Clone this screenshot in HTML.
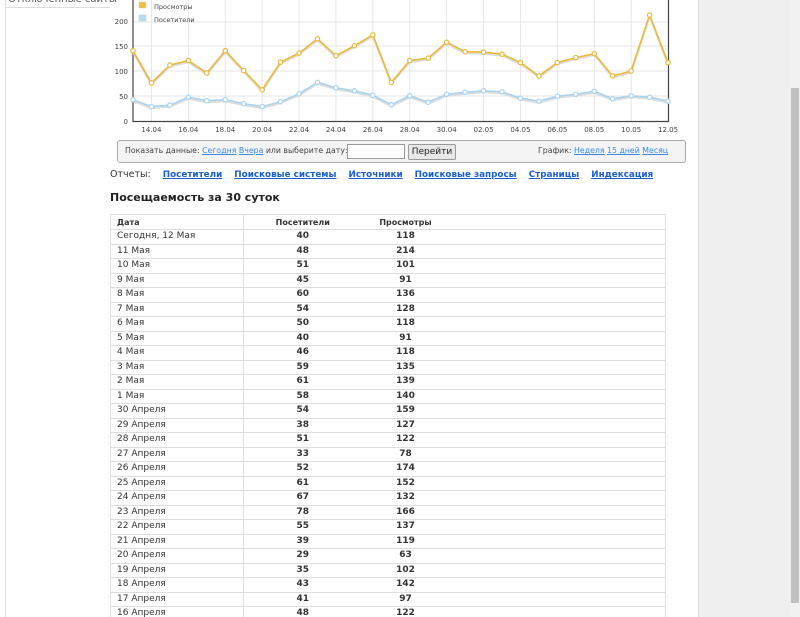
<!DOCTYPE html>
<html><head><meta charset="utf-8"><style>
html,body{margin:0;width:800px;height:617px;overflow:hidden}
body{background:#fff;font-family:"DejaVu Sans","Liberation Sans",sans-serif;position:relative}
.side{position:absolute;left:5px;top:0;width:1px;height:617px;background:#ddd}
.sidetxt{position:absolute;left:8px;top:-6px;font-size:10px;color:#555}
.sideline{position:absolute;left:6px;top:7px;width:104px;height:1px;background:#ddd}
.grey{position:absolute;left:698px;top:0;width:92px;height:617px;background:#efefef;border-left:1px solid #ddd}
.sb{position:absolute;left:790px;top:0;width:10px;height:617px;background:#f1f1f1}
.thumb{position:absolute;left:791px;top:88px;width:8px;height:515px;background:#c1c1c1}
.bar{position:absolute;left:117px;top:140px;width:567px;height:21px;border:1px solid #aaa;border-radius:3px;background:#f4f4f4;font-size:7.8px;color:#444;white-space:nowrap}
a{color:#1a5fd0}
.bar a{color:#3a8ae0;text-decoration:underline}
.inp{position:absolute;left:229px;top:3px;width:56px;height:13px;border:1px solid #999;background:#fff}
.btn{position:absolute;left:290px;top:3px;width:46px;height:14px;border:1px solid #999;border-radius:2px;background:#e8e8e8;font-size:9px;text-align:center;line-height:14px;color:#222}
.rep{position:absolute;left:110px;top:169px;font-size:9.5px;color:#333;white-space:nowrap}
.rep a{font-weight:bold;font-size:8.8px;margin-left:9px;color:#1a5fd0;text-decoration:underline}
h3{position:absolute;left:110px;top:191px;margin:0;font-size:11px;color:#222}
table{position:absolute;left:110px;top:214px;width:556px;border-collapse:collapse;font-size:9px;color:#333;table-layout:fixed}
td{border:1px solid #ddd;height:13.5px;padding:0 6px;line-height:13.5px;white-space:nowrap}
td:nth-child(2),td:nth-child(3){border-left:none;border-right:none;text-align:center;font-weight:bold;font-size:9px}
td:nth-child(4){border-left:none}
th{font-weight:bold;font-size:8px;text-align:left;border:1px solid #ddd;padding:0 6px;height:14px}
</style></head><body>
<div class="side"></div><div class="sidetxt">Отключенные сайты</div><div class="sideline"></div>
<div class="grey"></div><div class="sb"></div><div class="thumb"></div>
<svg id="ch" style="position:absolute;left:0;top:0" width="700" height="140" font-family="DejaVu Sans,sans-serif" font-size="7" fill="#444"></svg>
<div class="bar"><span style="position:absolute;left:7px;top:5px">Показать данные: <a>Сегодня</a> <a>Вчера</a> или выберите дату:</span><div class="inp"></div><div class="btn">Перейти</div><span style="position:absolute;left:420px;top:5px">График: <a>Неделя</a> <a>15 дней</a> <a>Месяц</a></span></div>
<div class="rep">Отчеты: <a>Посетители</a> <a>Поисковые системы</a> <a>Источники</a> <a>Поисковые запросы</a> <a>Страницы</a> <a>Индексация</a></div>
<h3>Посещаемость за 30 суток</h3>
<table id="t"><colgroup><col style="width:133px"><col style="width:118px"><col style="width:88px"><col></colgroup><tr><th>Дата</th><th style="text-align:center;border-left:none;border-right:none">Посетители</th><th style="text-align:center;border-left:none;border-right:none">Просмотры</th><th style="border-left:none"></th></tr></table>
<script>
var V=[142,77,113,122,97,142,102,63,119,137,166,132,152,174,78,122,127,159,140,139,135,118,91,118,128,136,91,101,214,118];
var P=[43,29,32,48,41,43,35,29,39,55,78,67,61,52,33,51,38,54,58,61,59,46,40,50,54,60,45,51,48,40];
var s='';
for(var i=0;i<30;i+=2){var x=151.45+i*18.45;if(i<28)s+='<line x1="'+x+'" y1="0" x2="'+x+'" y2="121" stroke="#e6e6e6"/>';}
[22,46,71,96].forEach(function(y){s+='<line x1="133" y1="'+y+'" x2="668" y2="'+y+'" stroke="#e6e6e6"/>';});
var yl=[[200,24],[150,49],[100,74],[50,99],[0,124]];yl.forEach(function(a){s+='<text x="128" y="'+a[1]+'" text-anchor="end">'+a[0]+'</text>';});
s+='<path d="M133 0V121.5H668.5V0" fill="none" stroke="#444" stroke-width="1.2"/>';
var lab=['14.04','16.04','18.04','20.04','22.04','24.04','26.04','28.04','30.04','02.05','04.05','06.05','08.05','10.05','12.05'];
lab.forEach(function(l,k){var x=151.45+k*2*18.45;s+='<text x="'+x+'" y="132" text-anchor="middle">'+l+'</text>';});
function line(D,c){var p=D.map(function(v,i){return (133+i*18.45).toFixed(1)+','+(121-v*0.495).toFixed(1)}).join(' ');
var r='<polyline points="'+p+'" fill="none" stroke="#ddd" stroke-width="2" transform="translate(0,1.5)"/><polyline points="'+p+'" fill="none" stroke="'+c+'" stroke-width="1.6"/>';
D.forEach(function(v,i){r+='<circle cx="'+(133+i*18.45)+'" cy="'+(121-v*0.495)+'" r="2.2" fill="#fff" stroke="'+c+'" stroke-width="1.2"/>'});return r;}
s+=line(P,'#a9d3f2')+line(V,'#e8b93a');
s+='<rect x="139" y="2" width="7" height="6" fill="#eec040" stroke="#ccc" stroke-width=".5"/><text x="154" y="9" font-size="6.5">Просмотры</text><rect x="139" y="15" width="7" height="6" fill="#b5dbf5" stroke="#ccc" stroke-width=".5"/><text x="154" y="22" font-size="6.5">Посетители</text>';
document.getElementById('ch').innerHTML=s;
var names=['Сегодня, 12 Мая'];for(var d=11;d>=1;d--)names.push(d+' Мая');for(var d=30;d>=16;d--)names.push(d+' Апреля');
var h='';for(var i=29,k=0;k<names.length;i--,k++){h+='<tr><td>'+names[k]+'</td><td>'+P[i]+'</td><td>'+V[i]+'</td><td></td></tr>';}
document.getElementById('t').innerHTML+=h;
</script>
</body></html>
